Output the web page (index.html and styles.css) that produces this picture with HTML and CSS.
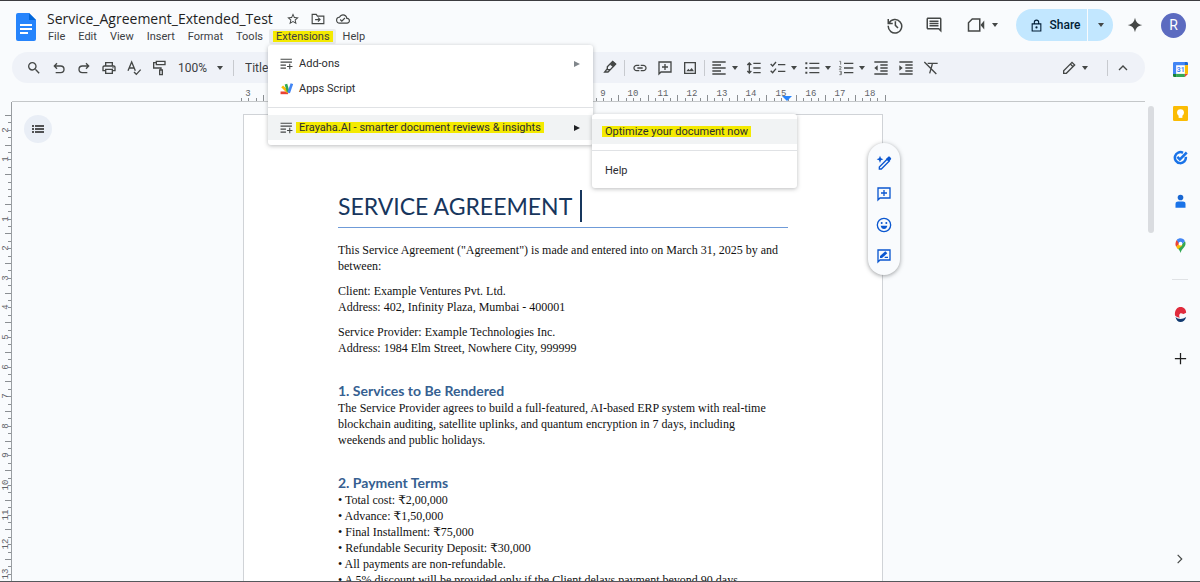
FILE: index.html
```html
<!DOCTYPE html>
<html lang="en">
<head>
    <meta charset="UTF-8">
    <meta name="viewport" content="width=device-width, initial-scale=1.0">
    <title>Service_Agreement_Extended_Test</title>
    <link rel="stylesheet" href="styles.css">
</head>
<body>
    <svg class="sprite" aria-hidden="true">
        <symbol id="star" viewBox="0 0 24 24"><path d="M22 9.240l-7.190-.62L12 2 9.190 8.630 2 9.240l5.460 4.730L5.820 21 12 17.270 18.180 21l-1.630-7.030L22 9.240zM12 15.400l-3.760 2.270 1-4.280-3.320-2.880 4.380-.38L12 6.100l1.710 4.040 4.380.38-3.320 2.880 1 4.280L12 15.400z"/></symbol>
        <symbol id="folder" viewBox="0 0 24 24"><path class="line" d="M2 4h7l2 3h11v13H2z"/><path class="line" d="M7 13h8M12 9.500l3.500 3.500-3.500 3.500"/></symbol>
        <symbol id="cloud" viewBox="0 0 24 24"><path d="M19.350 10.040A7.490 7.490 0 0 0 12 4C9.110 4 6.600 5.640 5.350 8.040A5.994 5.994 0 0 0 0 14c0 3.310 2.690 6 6 6h13c2.760 0 5-2.240 5-5 0-2.640-2.050-4.780-4.650-4.960zM19 18H6c-2.210 0-4-1.790-4-4 0-2.050 1.530-3.760 3.560-3.970l1.070-.11.5-.95A5.469 5.469 0 0 1 12 6c2.620 0 4.880 1.860 5.390 4.430l.3 1.500 1.530.11A2.980 2.980 0 0 1 22 15c0 1.650-1.350 3-3 3zm-9-3.820l-2.090-2.090L6.500 13.500 10 17l6.010-6.010-1.410-1.410z"/></symbol>
        <symbol id="history" viewBox="0 0 24 24"><path class="line" d="M3 4v6h6M4 9.500A9 9 0 1 1 3 13M12.500 7v5.500L16 16"/></symbol>
        <symbol id="comments" viewBox="0 0 24 24"><path d="M21.990 4c0-1.100-.89-2-1.990-2H4c-1.100 0-2 .9-2 2v12c0 1.100.9 2 2 2h14l4 4-.01-18zM20 4v13.170L18.830 16H4V4h16zM6 12h12v2H6zm0-3h12v2H6zm0-3h12v2H6z"/></symbol>
        <symbol id="video" viewBox="0 0 24 24"><path class="line" d="M7 4h10v16H2V9z"/><path d="M18 12l5-6v12z"/></symbol>
        <symbol id="caret" viewBox="0 0 8 8"><path d="M1 2h6L4 6z"/></symbol>
        <symbol id="lock" viewBox="0 0 24 24"><path class="line" d="M4 9h16v13H4zM8 9V6a4 4 0 0 1 8 0v3"/><circle cx="12" cy="15.500" r="2"/></symbol>
        <symbol id="sparkle" viewBox="0 0 24 24"><path d="M12 1c1.500 7 4 9.500 11 11-7 1.500-9.500 4-11 11-1.500-7-4-9.500-11-11 7-1.500 9.500-4 11-11z"/></symbol>
        <symbol id="search" viewBox="0 0 24 24"><path d="M15.500 14h-.79l-.28-.27A6.470 6.470 0 0 0 16 9.500 6.500 6.500 0 1 0 9.500 16c1.610 0 3.090-.59 4.230-1.570l.27.28v.79l5 4.990L20.490 19l-4.990-5zm-6 0C7.010 14 5 11.990 5 9.500S7.010 5 9.500 5 14 7.010 14 9.500 11.990 14 9.500 14z"/></symbol>
        <symbol id="undo" viewBox="0 0 24 24"><path class="line" d="M9 5L5 9l4 4M5 9h9.500a4.500 4.500 0 0 1 0 10H7"/></symbol>
        <symbol id="redo" viewBox="0 0 24 24"><path class="line" d="M15 5l4 4-4 4M19 9H9.500a4.500 4.500 0 0 0 0 10H17"/></symbol>
        <symbol id="print" viewBox="0 0 24 24"><path d="M19 8h-1V3H6v5H5c-1.660 0-3 1.340-3 3v6h4v4h12v-4h4v-6c0-1.660-1.340-3-3-3zM8 5h8v3H8V5zm8 12v2H8v-4h8v2zm2-2v-2H6v2H4v-4c0-.55.45-1 1-1h14c.55 0 1 .45 1 1v4h-2z"/><circle cx="18" cy="11.500" r="1"/></symbol>
        <symbol id="spell" viewBox="0 0 24 24"><path class="line" d="M3 16L8.500 3 14 16M5 12h7M12 18l3.500 3.500 6.500-7"/></symbol>
        <symbol id="paint" viewBox="0 0 24 24"><path class="line" d="M8 2h13v5H8zM8 4H4v8h11v3M13 15h4v7h-4z"/></symbol>
        <symbol id="marker" viewBox="0 0 24 24"><path class="line" d="M8 10l8-8 4.500 4-8 8.500H8zM8 13l-4 5h5l3-3"/><path d="M12 7l4-5 5 4-4 5z"/></symbol>
        <symbol id="link" viewBox="0 0 24 24"><path d="M3.900 12c0-1.710 1.390-3.100 3.100-3.100h4V7H7c-2.760 0-5 2.240-5 5s2.240 5 5 5h4v-1.900H7c-1.710 0-3.100-1.390-3.100-3.100zM8 13h8v-2H8v2zm9-6h-4v1.900h4c1.710 0 3.100 1.390 3.100 3.100s-1.390 3.100-3.100 3.100h-4V17h4c2.760 0 5-2.240 5-5s-2.240-5-5-5z"/></symbol>
        <symbol id="add-comment" viewBox="0 0 24 24"><path class="line" d="M3 21V3h18v15H6zM12 6v9M7.500 10.500h9"/></symbol>
        <symbol id="image" viewBox="0 0 24 24"><path class="line" d="M4 4h16v16H4z"/><path d="M6.500 17l3-4 2 2.500L14.500 12l3.500 5z"/></symbol>
        <symbol id="align" viewBox="0 0 24 24"><path class="line" d="M2 3h20M2 7.500h13M2 12h20M2 16.500h13M2 21h20"/></symbol>
        <symbol id="spacing" viewBox="0 0 24 24"><path class="line" d="M11 5h11M11 12h11M11 19h11M5 5v14M2 7.500L5 4.500l3 3M2 16.500l3 3 3-3"/></symbol>
        <symbol id="checklist" viewBox="0 0 24 24"><path class="line" d="M12 7h11M12 17h11M1 6l3 3 5-6M1 16l3 3 5-6"/></symbol>
        <symbol id="bullets" viewBox="0 0 24 24"><path class="line" d="M8 5h15M8 12h15M8 19h15"/><path d="M2 3.500h3v3H2zM2 10.500h3v3H2zM2 17.500h3v3H2z"/></symbol>
        <symbol id="outline-list" viewBox="0 0 24 24"><path class="line bold" d="M6 6h18M6 12h18M6 18h18M0 6h4M0 12h4M0 18h4"/></symbol>
        <symbol id="numbers" viewBox="0 0 24 24"><path class="line" d="M9 5h14M9 12h14M9 19h14"/><path class="line thin" d="M2 2h2v5M1.500 10h3v1.500L2 14h3M2 17h3v5H2M3 19.500h2"/></symbol>
        <symbol id="outdent" viewBox="0 0 24 24"><path class="line" d="M2 3h20M11 7.500h11M11 12h11M11 16.500h11M2 21h20"/><path d="M7 8v8l-5-4z"/></symbol>
        <symbol id="indent" viewBox="0 0 24 24"><path class="line" d="M2 3h20M11 7.500h11M11 12h11M11 16.500h11M2 21h20"/><path d="M2 8v8l5-4z"/></symbol>
        <symbol id="clear" viewBox="0 0 24 24"><path class="line" d="M7 5h15M14 6l-4 14M2 3l18 18"/></symbol>
        <symbol id="pencil" viewBox="0 0 24 24"><path class="line" d="M4 20v-4L16.500 3.500l4 4L8 20zM14 6l4 4"/></symbol>
        <symbol id="chevron" viewBox="0 0 24 24"><path class="line" d="M6 15l6-6 6 6"/></symbol>
        <symbol id="chevron-right" viewBox="0 0 24 24"><path class="line" d="M8 5l7 7-7 7"/></symbol>
        <symbol id="addon" viewBox="0 0 24 24"><path class="line" d="M1 4h21M1 9.500h21M1 15h10M1 20.500h10M18 12.500v10M13 17.500h10"/></symbol>
        <symbol id="arrow" viewBox="0 0 8 8"><path d="M1 1l6 3-6 3z"/></symbol>
        <symbol id="magic" viewBox="0 0 24 24"><path class="line" d="M5 21v-3L17 6l3 3L8 21z"/><path d="M15 6l3-3c1-1 2-1 3 0l1 1c1 1 1 2 0 3l-3 3zM6 1l1.500 4L11 6.500 7.500 8 6 12 4.500 8 1 6.500 4.500 5z"/></symbol>
        <symbol id="smile" viewBox="0 0 24 24"><circle class="line" cx="12" cy="12" r="10"/><path d="M7 13h10c-.5 3-2.500 5-5 5s-4.500-2-5-5z"/><circle cx="8.500" cy="9" r="1.500"/><circle cx="15.500" cy="9" r="1.500"/></symbol>
        <symbol id="suggest" viewBox="0 0 24 24"><path class="line" d="M3 21V3h18v15H6zM13 14h5"/><path d="M6 12v3h3l8-7-3-3z"/></symbol>
        <symbol id="plus" viewBox="0 0 24 24"><path fill="#1f1f1f" d="M11 3h2v8h8v2h-8v8h-2v-8H3v-2h8z"/></symbol>
    </svg>

    <header class="header">
        <a class="logo" href="#" aria-label="Docs home">
            <svg viewBox="0 0 20 28"><path fill="#2684fc" d="M2 0h11l7 7v19a2 2 0 0 1-2 2H2a2 2 0 0 1-2-2V2a2 2 0 0 1 2-2z"/><path fill="#0066da" d="M13 0l7 7h-7z"/><path stroke="#fff" stroke-width="2" d="M4 12h12M4 16h12M4 20h8"/></svg>
        </a>
        <div class="heading">
            <div class="title-row">
                <span class="doc-title">Service_Agreement_Extended_Test</span>
                <button aria-label="Star"><svg class="icon small"><use href="#star"/></svg></button>
                <button aria-label="Move"><svg class="icon small"><use href="#folder"/></svg></button>
                <button aria-label="Document status"><svg class="icon small"><use href="#cloud"/></svg></button>
            </div>
            <nav class="menubar">
                <button>File</button>
                <button>Edit</button>
                <button>View</button>
                <button>Insert</button>
                <button>Format</button>
                <button>Tools</button>
                <div class="menu-wrap">
                    <button class="open"><mark>Extensions</mark></button>
                    <div class="menu">
                        <button class="item"><svg class="icon"><use href="#addon"/></svg>Add-ons<svg class="arrow faded"><use href="#arrow"/></svg></button>
                        <button class="item">
                            <svg class="icon" viewBox="0 0 24 24"><path stroke="#ea4335" stroke-width="5" d="M1 20h14"/><path stroke="#fbbc04" stroke-width="5" d="M4 8l11 11"/><path stroke="#34a853" stroke-width="5" d="M11 4l4 14"/><path stroke="#4285f4" stroke-width="5" d="M22 3l-6 17"/></svg>Apps Script
                        </button>
                        <hr>
                        <div class="menu-wrap">
                            <button class="item active"><svg class="icon"><use href="#addon"/></svg><mark>Erayaha.AI - smarter document reviews &amp; insights</mark><svg class="arrow"><use href="#arrow"/></svg></button>
                            <div class="menu submenu">
                                <button class="item active"><mark>Optimize your document now</mark></button>
                                <hr>
                                <button class="item">Help</button>
                            </div>
                        </div>
                    </div>
                </div>
                <button>Help</button>
            </nav>
        </div>
        <div class="header-tools">
            <button aria-label="Version history"><svg class="icon large"><use href="#history"/></svg></button>
            <button aria-label="Comments"><svg class="icon large"><use href="#comments"/></svg></button>
            <button class="meet" aria-label="Meet"><svg class="icon large"><use href="#video"/></svg><svg class="caret"><use href="#caret"/></svg></button>
            <div class="share">
                <button class="share-main"><svg class="icon"><use href="#lock"/></svg>Share</button>
                <button class="share-more" aria-label="Share options"><svg class="caret"><use href="#caret"/></svg></button>
            </div>
            <button class="gemini" aria-label="Ask Gemini"><svg class="icon"><use href="#sparkle"/></svg></button>
            <button class="avatar" aria-label="Account">R</button>
        </div>
    </header>

    <div class="workspace">
        <main class="main">
            <div class="toolbar">
                <div class="tools-start">
                    <button class="tool" aria-label="Search"><svg class="icon"><use href="#search"/></svg></button>
                    <button class="tool" aria-label="Undo"><svg class="icon"><use href="#undo"/></svg></button>
                    <button class="tool" aria-label="Redo"><svg class="icon"><use href="#redo"/></svg></button>
                    <button class="tool" aria-label="Print"><svg class="icon"><use href="#print"/></svg></button>
                    <button class="tool" aria-label="Spelling"><svg class="icon"><use href="#spell"/></svg></button>
                    <button class="tool" aria-label="Paint format"><svg class="icon"><use href="#paint"/></svg></button>
                    <label class="select"><select aria-label="Zoom"><option>100%</option></select><svg class="caret"><use href="#caret"/></svg></label>
                    <span class="divider"></span>
                    <label class="select"><select aria-label="Styles"><option>Title</option></select></label>
                </div>
                <button class="tool" aria-label="Highlight color"><svg class="icon"><use href="#marker"/></svg></button>
                <span class="divider"></span>
                <button class="tool" aria-label="Insert link"><svg class="icon"><use href="#link"/></svg></button>
                <button class="tool" aria-label="Add comment"><svg class="icon"><use href="#add-comment"/></svg></button>
                <button class="tool" aria-label="Insert image"><svg class="icon"><use href="#image"/></svg></button>
                <span class="divider"></span>
                <button class="tool split" aria-label="Align"><svg class="icon"><use href="#align"/></svg><svg class="caret"><use href="#caret"/></svg></button>
                <button class="tool" aria-label="Line spacing"><svg class="icon"><use href="#spacing"/></svg></button>
                <button class="tool split" aria-label="Checklist"><svg class="icon"><use href="#checklist"/></svg><svg class="caret"><use href="#caret"/></svg></button>
                <button class="tool split" aria-label="Bulleted list"><svg class="icon"><use href="#bullets"/></svg><svg class="caret"><use href="#caret"/></svg></button>
                <button class="tool split" aria-label="Numbered list"><svg class="icon"><use href="#numbers"/></svg><svg class="caret"><use href="#caret"/></svg></button>
                <button class="tool" aria-label="Decrease indent"><svg class="icon"><use href="#outdent"/></svg></button>
                <button class="tool" aria-label="Increase indent"><svg class="icon"><use href="#indent"/></svg></button>
                <button class="tool" aria-label="Clear formatting"><svg class="icon"><use href="#clear"/></svg></button>
                <div class="tools-end">
                    <button class="tool split" aria-label="Editing mode"><svg class="icon"><use href="#pencil"/></svg><svg class="caret"><use href="#caret"/></svg></button>
                    <span class="divider"></span>
                    <button class="tool" aria-label="Hide menus"><svg class="icon"><use href="#chevron"/></svg></button>
                </div>
            </div>
            <div class="ruler-row"><svg class="ruler-x" id="rulerX"></svg></div>
            <div class="editor">
                <svg class="ruler-y" id="rulerY"></svg>
                <div class="canvas">
                    <button class="outline" aria-label="Show outline"><svg class="icon"><use href="#outline-list"/></svg></button>
                    <article class="page">
                        <h1>SERVICE AGREEMENT<span class="cursor"></span></h1>
                        <p>This Service Agreement ("Agreement") is made and entered into on March 31, 2025 by and between:</p>
                        <p>Client: Example Ventures Pvt. Ltd.<br>Address: 402, Infinity Plaza, Mumbai - 400001</p>
                        <p>Service Provider: Example Technologies Inc.<br>Address: 1984 Elm Street, Nowhere City, 999999</p>
                        <h2>1. Services to Be Rendered</h2>
                        <p>The Service Provider agrees to build a full-featured, AI-based ERP system with real-time blockchain auditing, satellite uplinks, and quantum encryption in 7 days, including<br>weekends and public holidays.</p>
                        <h2>2. Payment Terms</h2>
                        <ul>
                            <li>Total cost: ₹2,00,000</li>
                            <li>Advance: ₹1,50,000</li>
                            <li>Final Installment: ₹75,000</li>
                            <li>Refundable Security Deposit: ₹30,000</li>
                            <li>All payments are non-refundable.</li>
                            <li>A 5% discount will be provided only if the Client delays payment beyond 90 days.</li>
                        </ul>
                        <div class="floating">
                            <button aria-label="Help me write"><svg class="icon"><use href="#magic"/></svg></button>
                            <button aria-label="Add comment"><svg class="icon"><use href="#add-comment"/></svg></button>
                            <button aria-label="Add emoji reaction"><svg class="icon"><use href="#smile"/></svg></button>
                            <button aria-label="Suggest edits"><svg class="icon"><use href="#suggest"/></svg></button>
                        </div>
                    </article>
                </div>
                <span class="scrollbar"></span>
            </div>
        </main>
        <aside class="side">
            <button aria-label="Calendar"><svg class="icon" viewBox="0 0 24 24"><path fill="#fff" d="M4 4h15v15H4z"/><path fill="#4285f4" d="M2 0h18v5H5v14H0V2a2 2 0 0 1 2-2z"/><path fill="#1967d2" d="M19 0h3a2 2 0 0 1 2 2v3h-5z"/><path fill="#fbbc04" d="M19 5h5v14h-5z"/><path fill="#34a853" d="M5 19h14v5H5z"/><path fill="#188038" d="M0 19h5v5H2a2 2 0 0 1-2-2z"/><path fill="#ea4335" d="M19 19h5l-5 5z"/><text x="6" y="16" font-size="11" font-weight="700" fill="#4285f4">31</text></svg></button>
            <button aria-label="Keep"><svg class="icon" viewBox="0 0 24 24"><rect width="24" height="24" rx="2" fill="#fbbc04"/><circle cx="12" cy="10.500" r="5.500" fill="#fff"/><path fill="#fff" d="M9 14h6v5H9z"/></svg></button>
            <button aria-label="Tasks"><svg class="icon" viewBox="0 0 24 24"><path fill="none" stroke="#1a73e8" stroke-width="4" d="M16 4.500A8.800 8.800 0 1 0 20.500 11M7 11l4 4L22 4"/></svg></button>
            <button aria-label="Contacts"><svg class="icon" viewBox="0 0 24 24"><circle cx="12" cy="5.500" r="4.500" fill="#1967d2"/><path fill="#1a73e8" d="M4 22v-6c0-3 2-4 4-4h8c2 0 4 1 4 4v6z"/></svg></button>
            <button aria-label="Maps"><svg class="icon" viewBox="0 0 24 24"><path fill="#34a853" d="M20 9c0 6-6 7-8 15-1-4-3-6-5-8L19 5c1 1 1 3 1 4z"/><path fill="#fbbc04" d="M5 14l6-7 4 5-7 6z"/><path fill="#ea4335" d="M6 3l5 5-6 6c-2-4-1-8 1-11z"/><path fill="#4285f4" d="M6 3c4-4 11-3 13 2l-7 7-3-4z"/><circle cx="12" cy="9" r="3" fill="#fff"/></svg></button>
            <hr>
            <button aria-label="Add-on"><svg class="icon" viewBox="0 0 24 24"><path fill="#e02b3c" d="M3 12C3 4 7 0 12 0c6 0 9 4 9 9l-4 2-4-1c-3 0-4 4-2 7-5-1-8-2-8-5z"/><path fill="#123a70" d="M4 16c2 2 5 3 8 3s6-1 9-3c-1 5-5 8-9 8s-7-3-8-8z"/></svg></button>
            <button aria-label="Get add-ons"><svg class="icon"><use href="#plus"/></svg></button>
            <button class="collapse" aria-label="Hide side panel"><svg class="icon small"><use href="#chevron-right"/></svg></button>
        </aside>
    </div>

    <script>
        const CM = 29.6; // one centimetre at this zoom

        // zero = position of the 0 mark, from/to in quarter centimetres
        function drawRuler(svg, vertical, zero, from, to, size) {
            let out = '';
            for (let q = from; q <= to; q++) {
                const pos = Math.round(zero + q * CM / 4);
                const length = q % 4 !== 0 && q % 2 === 0 ? 6 : 3;
                out += vertical
                    ? `<path d="M${size - length} ${pos}h${length}v1h-${length}z"/>`
                    : `<path d="M${pos} ${size - length}v${length}h1v-${length}z"/>`;
                if (q % 4 === 0 && q !== 0) {
                    const label = Math.abs(q / 4);
                    out += vertical
                        ? `<text transform="translate(8 ${pos}) rotate(-90)">${label}</text>`
                        : `<text x="${pos}" y="10">${label}</text>`;
                }
            }
            svg.innerHTML = out;
        }

        drawRuler(document.getElementById('rulerX'), false, 96, -13, 74, 15);
        drawRuler(document.getElementById('rulerY'), true, 87, -10, 54, 11);
        document.getElementById('rulerX').innerHTML += '<path class="marker" d="M541 10h10l-5 5z"/>';
    </script>
</body>
</html>
```
FILE: styles.css
```css
* {
    box-sizing: border-box;
}
body {
    display: flex;
    flex-direction: column;
    height: 100vh;
    margin: 0;
    overflow: hidden;
    border-top: 1px solid #3c3c40;
    border-bottom: 1px solid #55585c;
    background: #f9fbfd;
    color: #3c4043;
    font-family: Roboto, sans-serif;
    font-size: 12px;
}
button {
    display: flex;
    align-items: center;
    justify-content: center;
    padding: 0;
    border: none;
    background: none;
    color: inherit;
    font: inherit;
    cursor: pointer;
}
mark {
    background: #f4ea00;
    color: inherit;
}
hr {
    margin: 0;
    border: none;
    border-top: 1px solid #e0e2e5;
}
.sprite {
    display: none;
}
.icon {
    flex: none;
    width: 16px;
    height: 16px;
    fill: #444746;
    stroke: none;
    color: #444746;
}
.icon.small {
    width: 14px;
    height: 14px;
}
.icon.large {
    width: 18px;
    height: 18px;
}
.line {
    fill: none;
    stroke: currentColor;
    stroke-width: 2;
}
.thin {
    stroke-width: 1;
}
.bold {
    stroke-width: 3;
}
.caret {
    flex: none;
    width: 8px;
    height: 8px;
    fill: #444746;
}

/* Header */
.header {
    display: flex;
    align-items: flex-start;
    padding: 8px 14px 6px 16px;
    height: 46px;
    flex: none;
}
.logo {
    margin-top: 4px;
    width: 20px;
    height: 28px;
}
.logo svg {
    display: block;
}
.heading {
    margin-left: 11px;
}
.title-row {
    display: flex;
    align-items: center;
    gap: 11px;
    height: 20px;
}
.doc-title {
    margin-right: 2px;
    color: #1f1f1f;
    font-family: "Open Sans", sans-serif;
    font-size: 14px;
    line-height: 20px;
}
.menubar {
    display: flex;
    margin-left: -6px;
    font-size: 11px;
}
.menubar > button,
.open {
    height: 15px;
    padding: 0 6px 0 7px;
}
.open {
    border-radius: 2px;
    background: #e9ebee;
}
.open mark {
    margin: 0 -3px;
    padding: 0 3px;
    line-height: 11px;
}
.menu-wrap {
    position: relative;
}
.menu {
    position: absolute;
    z-index: 10;
    top: 16px;
    left: -1px;
    width: 325px;
    padding: 6px 0 5px;
    border-radius: 3px;
    background: #fff;
    box-shadow: 0 1px 4px rgba(60, 64, 67, 0.35);
}
.menu hr {
    margin: 6px 0 7px;
}
.item {
    width: 100%;
    height: 25px;
    padding: 0 12px;
    justify-content: flex-start;
    color: #2b2d30;
}
.item.active {
    background: #f1f3f4;
}
.item .icon {
    width: 13px;
    height: 13px;
    margin-right: 6px;
}
.item mark {
    margin: 0 -3px;
    padding: 0 3px;
    line-height: 11px;
}
.arrow {
    width: 8px;
    height: 8px;
    margin-left: auto;
    fill: #202124;
}
.arrow.faded {
    fill: #80868b;
}
.submenu {
    top: -1px;
    left: 324px;
    width: 205px;
    padding: 5px 0;
}
.submenu .item {
    padding: 0 13px;
}
.header-tools {
    display: flex;
    align-items: center;
    margin-left: auto;
    height: 32px;
}
.header-tools > button {
    margin-right: 21px;
}
.header-tools > .meet {
    gap: 6px;
    margin: 0 17px 0 3px;
}
.header-tools > .gemini {
    margin-right: 18px;
}
.share {
    display: flex;
    margin-right: 14px;
    border-radius: 16px;
    overflow: hidden;
    background: #c2e7ff;
    color: #001d35;
    font-weight: 500;
}
.share button {
    height: 32px;
}
.share .icon {
    width: 13px;
    height: 13px;
    color: #001d35;
    fill: #001d35;
}
.share-main {
    gap: 7px;
    width: 71px;
    padding-left: 7px;
}
.share-more {
    width: 26px;
    border-left: 1px solid #f9fbfd;
}
.header-tools > .avatar {
    width: 25px;
    height: 25px;
    margin-right: 0;
    border-radius: 50%;
    background: #5c6bc0;
    color: #fff;
    font-size: 14px;
}

/* Toolbar */
.workspace {
    display: flex;
    flex: 1;
    min-height: 0;
}
.main {
    display: flex;
    flex: 1;
    flex-direction: column;
    min-width: 0;
}
.toolbar {
    display: flex;
    align-items: center;
    flex: none;
    height: 31px;
    margin: 5px 15px 0 12px;
    padding: 0 10px 0 9px;
    border-radius: 16px;
    background: #eff2f8;
}
.tools-start {
    display: flex;
    align-items: center;
    flex: none;
    width: 576px;
}
.tool {
    width: 25px;
    height: 25px;
    flex: none;
}
.split {
    justify-content: flex-start;
    gap: 4px;
    width: 34px;
    padding-left: 4px;
}
.divider {
    width: 1px;
    height: 16px;
    margin: 0 2px;
    background: #c7cacf;
}
.tools-start .divider {
    margin-right: 4px;
}
.select {
    display: flex;
    align-items: center;
    gap: 8px;
    padding: 0 7px;
}
.select select {
    padding: 0;
    border: none;
    appearance: none;
    background: none;
    color: inherit;
    font: inherit;
}
.tools-end {
    display: flex;
    align-items: center;
    margin-left: auto;
}
.tools-end .divider {
    margin-left: 16px;
}

/* Rulers */
.ruler-row {
    display: flex;
    justify-content: center;
    flex: none;
    height: 19px;
    margin: 0 15px 0 12px;
    padding: 3px 31px 0 0;
    border-bottom: 1px solid #c4c7c9;
}
.ruler-x {
    width: 644px;
    height: 15px;
    overflow: visible;
}
.ruler-x path,
.ruler-y path {
    fill: #8b8f93;
}
.ruler-x text,
.ruler-y text {
    fill: #5f6368;
    font-family: "Liberation Mono", monospace;
    font-size: 9px;
    text-anchor: middle;
}
.ruler-x .marker {
    fill: #2684fc;
}
.ruler-y {
    flex: none;
    width: 12px;
    border-right: 1px solid #9a9ea2;
}

/* Document */
.editor {
    position: relative;
    display: flex;
    flex: 1;
    min-height: 0;
}
.canvas {
    position: relative;
    display: flex;
    justify-content: center;
    flex: 1;
    padding: 12px 46px 0 0;
    overflow: hidden;
}
.outline {
    position: absolute;
    top: 13px;
    left: 12px;
    width: 28px;
    height: 28px;
    border-radius: 50%;
    background: #e9eef6;
}
.outline .icon {
    width: 12px;
    height: 12px;
    color: #1f1f1f;
}
.page {
    position: relative;
    width: 640px;
    height: 905px;
    padding: 75px 94px;
    border: 1px solid #d0d3d7;
    background: #fff;
    color: #111;
    font-family: "Liberation Serif", "DejaVu Serif", serif;
    font-size: 12px;
    line-height: 16px;
}
.page h1 {
    display: flex;
    align-items: center;
    margin: 0 0 14px;
    padding-bottom: 5px;
    border-bottom: 1px solid #6f9bd8;
    color: #17365d;
    font-family: Lato, sans-serif;
    font-size: 23px;
    font-weight: 400;
    line-height: 32px;
}
.cursor {
    width: 2px;
    height: 32px;
    margin-left: 8px;
    background: #17365d;
}
.page p {
    margin: 0 0 9px;
}
.page h2 {
    margin: 25px 0 0;
    color: #365f91;
    font-family: Lato, sans-serif;
    font-size: 14px;
    line-height: 19px;
}
.page ul {
    margin: 0;
    padding: 0;
    list-style: none;
}
.page li::before {
    content: "• ";
}
.floating {
    position: absolute;
    top: 28px;
    right: -18px;
    display: flex;
    flex-direction: column;
    justify-content: space-around;
    height: 132px;
    width: 32px;
    padding: 4px 0;
    border-radius: 16px;
    background: #f9fbfd;
    box-shadow: 0 1px 4px rgba(60, 64, 67, 0.5);
}
.floating .icon {
    color: #0b57d0;
    fill: #0b57d0;
}
.scrollbar {
    position: absolute;
    top: 4px;
    right: 6px;
    width: 6px;
    height: 127px;
    border-radius: 3px;
    background: #dadce0;
}

/* Side panel */
.side {
    display: flex;
    flex-direction: column;
    flex: none;
    width: 40px;
}
.side button {
    height: 44px;
}
.side .icon:not(.small) {
    width: 15px;
    height: 15px;
}
.side hr {
    width: 16px;
    margin: 12px auto;
}
.side .collapse {
    margin-top: auto;
}
```
